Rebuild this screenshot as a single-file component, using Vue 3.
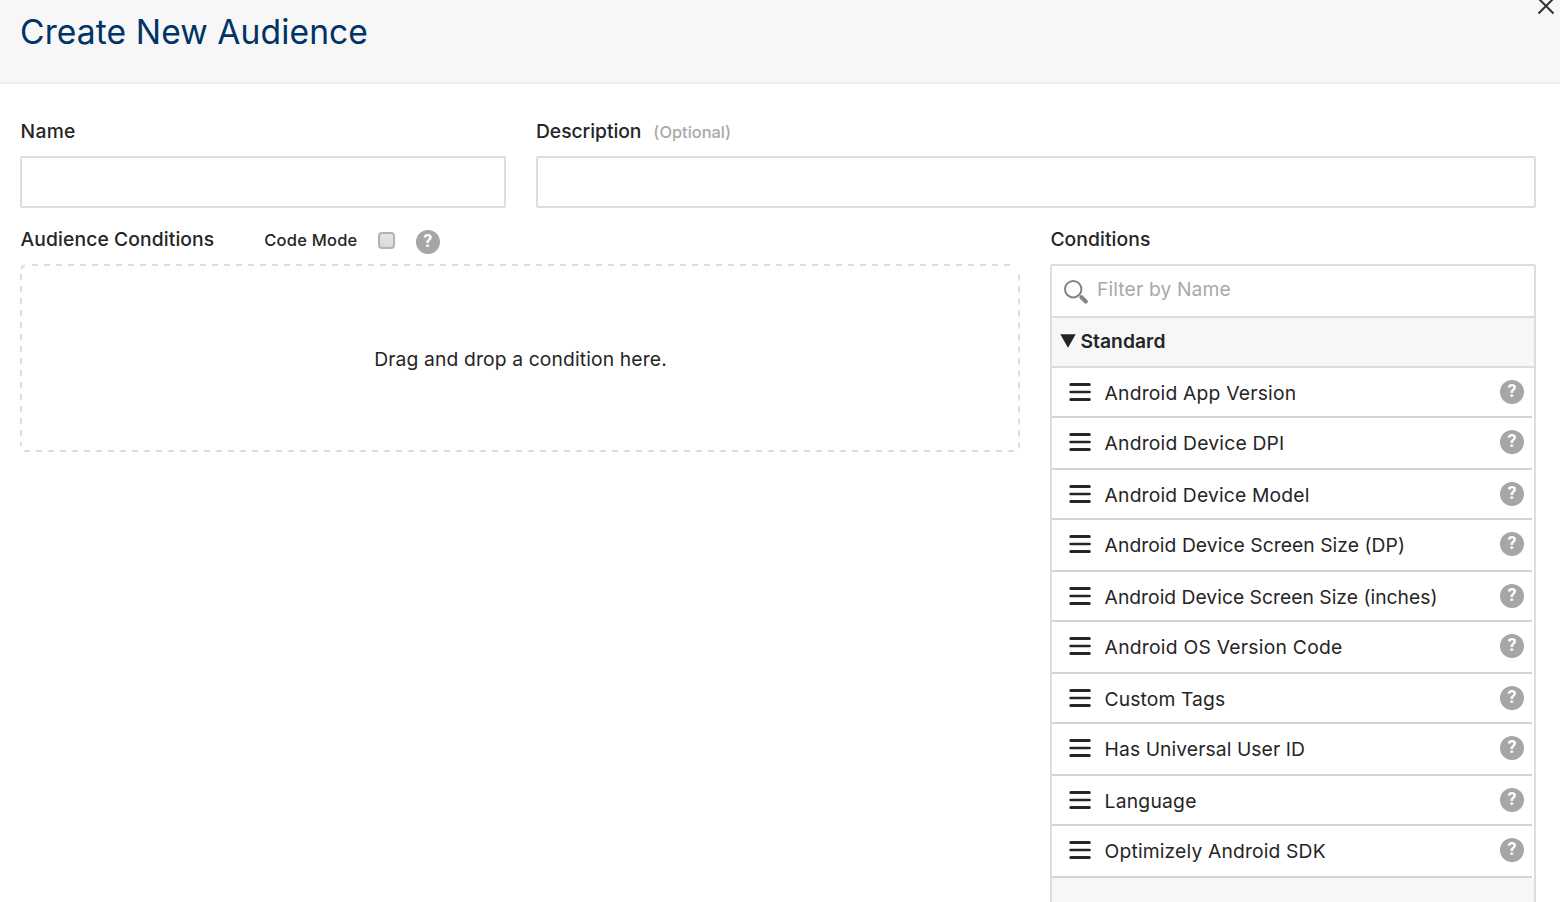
<script setup>
const conditions = [
  { name: 'Android App Version', tracking: 0.2, height: 50 },
  { name: 'Android Device DPI', tracking: 0.2, height: 52 },
  { name: 'Android Device Model', tracking: 0.17, height: 50 },
  { name: 'Android Device Screen Size (DP)', tracking: 0.05, height: 52 },
  { name: 'Android Device Screen Size (inches)', tracking: 0.01, height: 50 },
  { name: 'Android OS Version Code', tracking: 0.25, height: 52 },
  { name: 'Custom Tags', tracking: 0.1, height: 50 },
  { name: 'Has Universal User ID', tracking: 0.08, height: 52 },
  { name: 'Language', tracking: 0.22, height: 50 },
  { name: 'Optimizely Android SDK', tracking: 0.15, height: 52 },
]
</script>

<template>
  <div class="dialog">
    <header class="head">
      <h1>Create New Audience</h1>
      <svg class="close" width="18" height="18" viewBox="0 0 18 18">
        <path d="M1.5 1.5 16.5 16.5M16.5 1.5 1.5 16.5" />
      </svg>
    </header>

    <main class="body">
      <div class="fields">
        <div class="field">
          <div class="label l-name">Name</div>
          <input type="text" />
        </div>
        <div class="field">
          <div class="label l-desc">Description<span class="optional">(Optional)</span></div>
          <input type="text" />
        </div>
      </div>

      <div class="columns">
        <section>
          <div class="label l-aud">
            <span>Audience Conditions</span>
            <span class="code">Code Mode</span>
            <span class="check"></span>
            <span class="help">?</span>
          </div>
          <div class="drop">
            <svg width="1000" height="188" viewBox="0 0 1000 188">
              <path class="dash" d="M12 1H996" />
              <path class="dash" d="M4 187H996" />
              <path class="dash" d="M1 10V182" />
              <path class="dash" d="M999 10.5V186" />
              <path d="M1.3 5Q1.8 2.2 5 1.3" />
            </svg>
            <span>Drag and drop a condition here.</span>
          </div>
        </section>

        <section>
          <div class="label l-cond">Conditions</div>
          <div class="panel">
            <div class="filter">
              <svg width="26" height="26" viewBox="0 0 26 26">
                <circle cx="10.2" cy="10.2" r="8.2" />
                <path d="M18.4 18.2 22.8 22.6" />
              </svg>
              <span>Filter by Name</span>
            </div>
            <div class="group">
              <svg width="16" height="14" viewBox="0 0 16 14"><path d="M0.3 0.3H15.7L8 13.7Z" /></svg>
              <span>Standard</span>
            </div>
            <ul>
              <li v-for="c in conditions" :key="c.name" :style="{ height: c.height + 'px' }">
                <svg class="grip" width="23" height="20" viewBox="0 0 23 20">
                  <path class="bar" d="M1.8 2.5H20.3M1.8 17.5H20.3" />
                  <path class="mid" d="M1.6 10H20.5" />
                </svg>
                <span class="title" :style="{ letterSpacing: c.tracking + 'px' }">{{ c.name }}</span>
                <span class="help">?</span>
              </li>
            </ul>
            <div class="next"></div>
          </div>
        </section>
      </div>
    </main>
  </div>
</template>

<style>
body { margin: 0; background: #fff; }
</style>

<style scoped>
.dialog {
  width: 1560px;
  height: 902px;
  overflow: hidden;
  display: flex;
  flex-direction: column;
  background: #fff;
  color: #252525;
  font: 19.3px/24px Inter, Roboto, "Liberation Sans", sans-serif;
}
.dialog * { box-sizing: border-box; }
.head {
  position: relative;
  height: 84px;
  flex: none;
  padding: 11px 20px 0;
  background: #f7f7f7;
  border-bottom: 2px solid #eee;
}
h1 {
  margin: 0;
  font-size: 33.6px;
  line-height: 41px;
  font-weight: 400;
  letter-spacing: 0.1px;
  color: #036;
}
.close { position: absolute; right: 5px; top: -3px; }
.close path { stroke: #303030; stroke-width: 2; fill: none; }

.body { flex: 1; padding: 35px 24px 0 20px; display: flex; flex-direction: column; }
.fields { display: grid; grid-template-columns: 486px 1000px; gap: 30px; }
.label { height: 24px; margin-bottom: 13px; font-weight: 500; white-space: nowrap; }
.l-name { padding-left: 0.5px; letter-spacing: 0.3px; }
.l-desc { letter-spacing: -0.05px; }
.l-aud { padding-left: 0.6px; letter-spacing: 0.1px; display: flex; align-items: baseline; }
.l-cond { padding-left: 0.4px; letter-spacing: 0.08px; }
.optional { margin-left: 12px; font-size: 16.4px; letter-spacing: 0; color: #a9a9a9; }
input {
  display: block;
  width: 100%;
  height: 52px;
  margin: 0;
  border: 2px solid #ddd;
  border-radius: 2px;
  background: #fff;
  outline: 0;
}
.columns { display: grid; grid-template-columns: 1000px 486px; gap: 30px; margin-top: 19px; flex: 1; }
.code { width: 94px; margin-left: 50px; font-size: 16.5px; letter-spacing: 0.22px; }
.check {
  align-self: flex-start;
  width: 17px;
  height: 17px;
  margin: 5px 0 0 19.4px;
  border: 2px solid #b3b3b3;
  border-radius: 4px;
  background: linear-gradient(#e6e6e6, #d9d9d9);
}
.help {
  flex: none;
  width: 24px;
  height: 24px;
  border-radius: 50%;
  background: #a6a6a6;
  color: #fff;
  font: 700 18px/21px Roboto, "Liberation Sans", sans-serif;
  letter-spacing: 0;
  text-align: center;
}
.l-aud .help { align-self: flex-start; margin: 3px 0 0 21px; }
.drop {
  height: 188px;
  display: grid;
  place-items: center;
  letter-spacing: 0.13px;
}
.drop > * { grid-area: 1 / 1; }
.drop span { padding: 2px 0 0 1px; }
.drop path { fill: none; stroke: #ddd; stroke-width: 2; }
.drop .dash { stroke-dasharray: 6 6; }

.panel {
  border: 2px solid #ddd;
  border-bottom: 0;
  border-radius: 3px 3px 0 0;
  height: 638px;
  display: flex;
  flex-direction: column;
}
.filter {
  height: 52px;
  flex: none;
  border-bottom: 2px solid #ddd;
  display: flex;
  padding: 11px 0 0 11px;
  gap: 8px;
  color: #a9a9a9;
  letter-spacing: 0.12px;
}
.filter svg { margin-top: 2px; flex: none; }
.filter circle { fill: none; stroke: #858585; stroke-width: 2; }
.filter path { stroke: #858585; stroke-width: 4.2; stroke-linecap: round; }
.group {
  height: 50px;
  flex: none;
  background: #f7f7f7;
  border-bottom: 2px solid #ddd;
  display: flex;
  padding: 11px 0 0 8px;
  gap: 4.4px;
  font-weight: 600;
  letter-spacing: 0.05px;
}
.group svg { margin-top: 5px; flex: none; fill: #252525; }
ul { list-style: none; margin: 0; padding: 0 2px 0 0; flex: none; }
li {
  border-bottom: 2px solid #d4d4d4;
  display: flex;
  align-items: flex-start;
  padding: 13px 8px 0 17px;
}
.grip { flex: none; margin-top: 1px; }
.grip path { fill: none; stroke: #252525; stroke-linecap: round; }
.grip .bar { stroke-width: 3; }
.grip .mid { stroke-width: 2.6; }
.title { flex: 1; margin-left: 12.6px; white-space: nowrap; }
li .help { margin-top: -1px; }
.next { flex: 1; background: #f7f7f7; }
</style>
